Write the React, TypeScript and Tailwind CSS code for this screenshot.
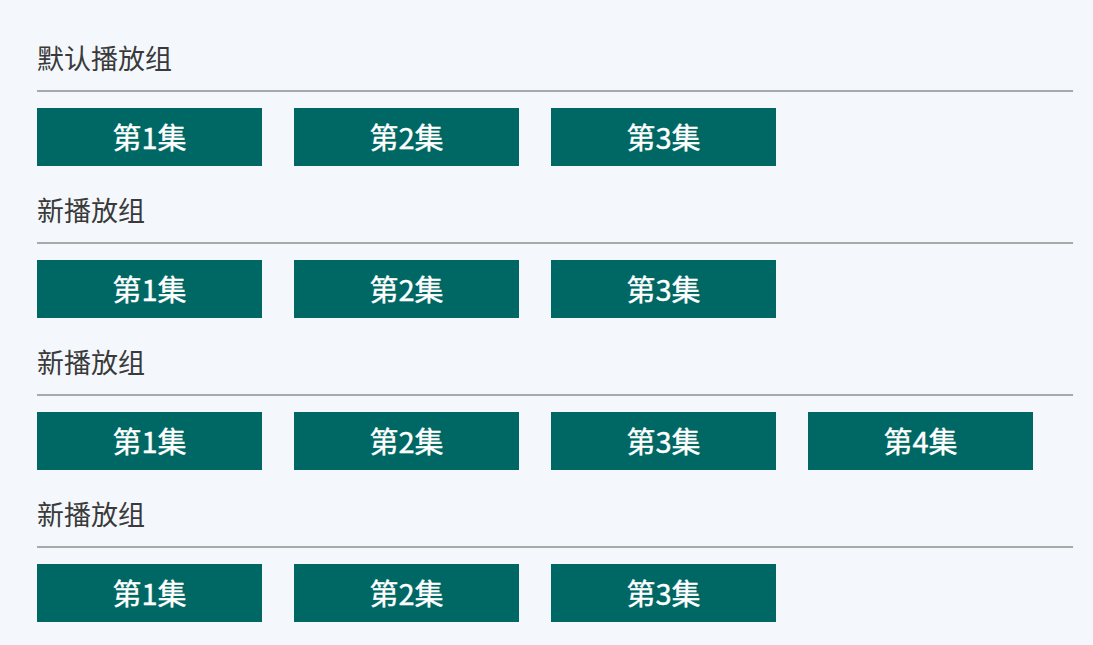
import React from "react";

const groups = [
  { title: "默认播放组", eps: 3 },
  { title: "新播放组", eps: 3 },
  { title: "新播放组", eps: 4 },
  { title: "新播放组", eps: 3 },
];

export default function App() {
  return (
    <div
      className="w-[1093px] h-[645px] bg-[#f4f8fc] pl-[37px] pr-[20px] pt-[14px] overflow-hidden"
      style={{ fontFamily: '"Noto Sans CJK SC", "Noto Sans", sans-serif' }}
    >
      {groups.map((g, i) => (
        <div key={i}>
          <div className="pt-[30px] pb-[18px] border-b-2 border-[#a9a9a9] text-[27px] leading-[28px] text-[#3a3a3a]">
            {g.title}
          </div>
          <div className="flex gap-[32px] mt-[16px]">
            {Array.from({ length: g.eps }).map((_, j) => (
              <div
                key={j}
                className="w-[225px] h-[58px] bg-[#006864] text-white text-[29px] font-normal [-webkit-text-stroke:0.4px_white] flex items-center justify-center"
              >
                第{j + 1}集
              </div>
            ))}
          </div>
        </div>
      ))}
    </div>
  );
}
